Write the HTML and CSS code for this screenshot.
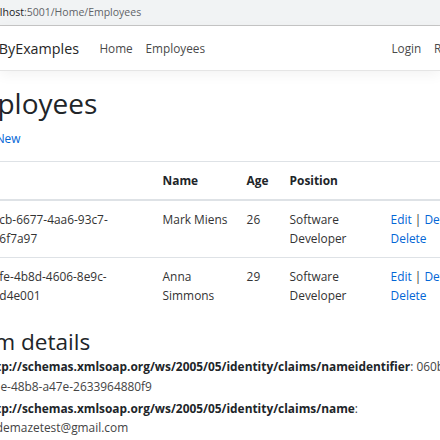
FILE: index.html
```html
<!DOCTYPE html>
<html>
<head>
    <title>Employees</title>
    <link rel="stylesheet" href="styles.css">
</head>
<body>
    <div class="address-bar">
        <span class="address-text"><span class="host">localhost</span>:5001/Home/Employees</span>
    </div>
    <header>
        <nav class="navbar">
            <div class="container navbar-inner">
                <a class="navbar-brand" href="#">OAuthByExamples</a>
                <ul class="nav-list nav-main">
                    <li><a class="nav-link" href="#">Home</a></li>
                    <li><a class="nav-link" href="#">Employees</a></li>
                </ul>
                <ul class="nav-list">
                    <li><a class="nav-link" href="#">Login</a></li>
                    <li><a class="nav-link" href="#">Register</a></li>
                </ul>
            </div>
        </nav>
    </header>
    <div class="container">
        <main>
            <h1>Employees</h1>
            <p class="create"><a href="#">Create New</a></p>
            <table class="table">
                <thead>
                    <tr>
                        <th class="col-id">Id</th>
                        <th class="col-name">Name</th>
                        <th class="col-age">Age</th>
                        <th class="col-position">Position</th>
                        <th></th>
                    </tr>
                </thead>
                <tbody>
                    <tr>
                        <td>ecf1facb-6677-4aa6-93c7-ecaf1f6f7a97</td>
                        <td>Mark Miens</td>
                        <td>26</td>
                        <td>Software Developer</td>
                        <td>
                            <a href="#">Edit</a> |
                            <a href="#">Details</a> |
                            <a href="#">Delete</a>
                        </td>
                    </tr>
                    <tr>
                        <td>fcae1ffe-4b8d-4606-8e9c-acef1fd4e001</td>
                        <td>Anna Simmons</td>
                        <td>29</td>
                        <td>Software Developer</td>
                        <td>
                            <a href="#">Edit</a> |
                            <a href="#">Details</a> |
                            <a href="#">Delete</a>
                        </td>
                    </tr>
                </tbody>
            </table>

            <h2>Claim details</h2>
            <ul class="claims">
                <li><strong>http://schemas.xmlsoap.org/ws/2005/05/identity/claims/nameidentifier</strong>: 060bd1f3-fa1e-48b8-a47e-2633964880f9</li>
                <li><strong>http://schemas.xmlsoap.org/ws/2005/05/identity/claims/name</strong>: codemazetest@gmail.com</li>
            </ul>
        </main>
    </div>
</body>
</html>
```

FILE: styles.css
```css
* {
    box-sizing: border-box;
}
html,
body {
    margin: 0;
}
body {
    font-family: "Open Sans", "Noto Sans", sans-serif;
    font-size: 11.9px;
    line-height: 19.2px;
    color: #212529;
    background-color: #fff;
    overflow: hidden;
}
a {
    color: #0366d6;
    text-decoration: none;
}
.address-bar {
    display: flex;
    align-items: center;
    height: 26px;
    background-color: #f1f3f4;
    border-bottom: 1px solid #c6c6c6;
    font-size: 10.5px;
    color: #5f6368;
    white-space: nowrap;
}
.address-text {
    margin-left: -20px;
}
.host {
    color: #202124;
}
.container {
    width: 540px;
    margin-left: -44px;
}
.navbar {
    background-color: #fff;
    border-bottom: 1px solid #e5e5e5;
    box-shadow: 0 4px 12px rgba(0, 0, 0, 0.05);
    margin-bottom: 12.8px;
}
.navbar-inner {
    display: flex;
    align-items: center;
    width: 529px;
    height: 44px;
    padding-top: 2px;
}
.navbar-brand {
    font-size: 14.3px;
    color: #262626;
    margin-right: 14px;
    white-space: nowrap;
}
.nav-list {
    display: flex;
    list-style: none;
    margin: 0;
    padding: 0;
}
.nav-main {
    flex: 1;
}
.nav-link {
    display: block;
    padding: 6.4px;
    font-size: 11.8px;
    color: #4a4a4a;
}
h1 {
    font-size: 28px;
    font-weight: 400;
    line-height: 38.4px;
    margin: 0 0 6.4px;
}
.create {
    margin: 0 0 12.8px;
}
.table {
    width: 100%;
    border-collapse: collapse;
    table-layout: fixed;
    margin-bottom: 12.8px;
}
.table th,
.table td {
    padding: 9px 6px 9px 9.6px;
    border-top: 1px solid #dee2e6;
    text-align: left;
    vertical-align: top;
}
.table td {
    color: #333;
}
.table thead th {
    border-bottom: 2px solid #dee2e6;
    vertical-align: bottom;
}
.col-id {
    width: 197px;
}
.col-name {
    width: 84px;
}
.col-age {
    width: 43px;
}
.col-position {
    width: 101px;
}
h2 {
    font-size: 22.6px;
    font-weight: 400;
    line-height: 30px;
    margin: 0;
}
.claims {
    margin: 0;
    padding-left: 27px;
    color: #444;
}
.claims li {
    margin-bottom: 3px;
}
.claims strong {
    color: #212529;
}
```
